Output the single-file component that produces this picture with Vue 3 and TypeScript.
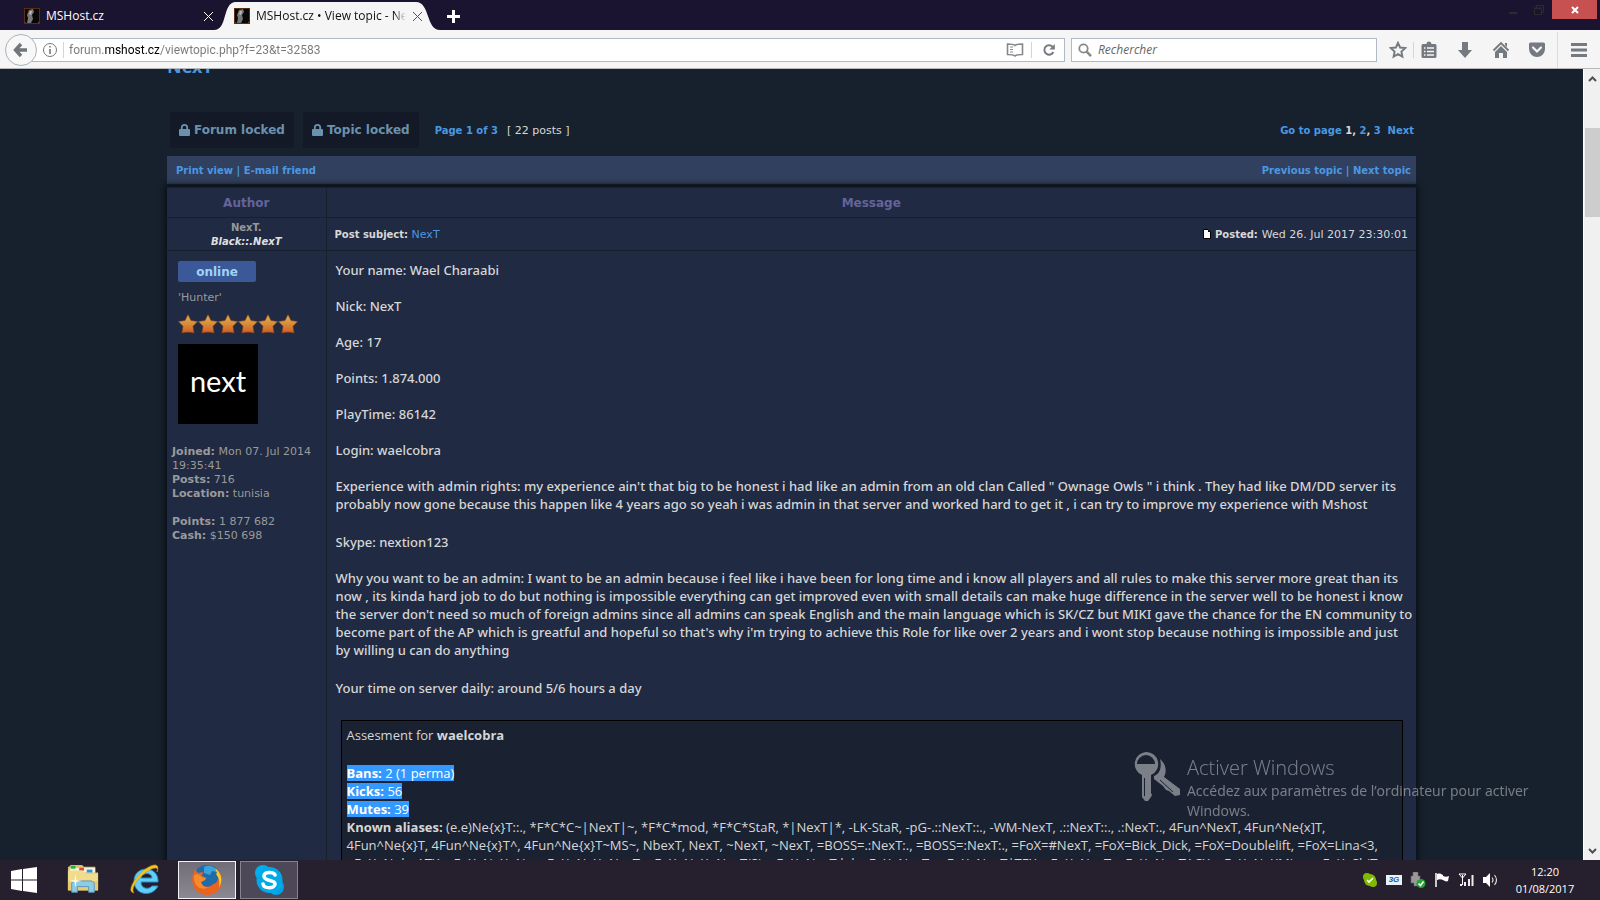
<script setup lang="ts">
import { ref } from 'vue'

interface Paragraph { lines: string[] }

const address = ref('forum.mshost.cz/viewtopic.php?f=23&t=32583')
const search = ref('')

const paragraphs: Paragraph[] = [
  { lines: ['Your name: Wael Charaabi'] },
  { lines: ['Nick: NexT'] },
  { lines: ['Age: 17'] },
  { lines: ['Points: 1.874.000'] },
  { lines: ['PlayTime: 86142'] },
  { lines: ['Login: waelcobra'] },
  {
    lines: [
      'Experience with admin rights: my experience ain\'t that big to be honest i had like an admin from an old clan Called " Ownage Owls " i think . They had like DM/DD server its',
      'probably now gone because this happen like 4 years ago so yeah i was admin in that server and worked hard to get it , i can try to improve my experience with Mshost',
    ],
  },
  { lines: ['Skype: nextion123'] },
  {
    lines: [
      'Why you want to be an admin: I want to be an admin because i feel like i have been for long time and i know all players and all rules to make this server more great than its',
      'now , its kinda hard job to do but nothing is impossible everything can get improved even with small details can make huge difference in the server well to be honest i know',
      "the server don't need so much of foreign admins since all admins can speak English and the main language which is SK/CZ but MIKI gave the chance for the EN community to",
      "become part of the AP which is greatful and hopeful so that's why i'm trying to achieve this Role for like over 2 years and i wont stop because nothing is impossible and just",
      'by willing u can do anything',
    ],
  },
  { lines: ['Your time on server daily: around 5/6 hours a day'] },
]

const penalties = [
  { label: 'Bans:', value: '2 (1 perma)' },
  { label: 'Kicks:', value: '56' },
  { label: 'Mutes:', value: '39' },
]

const aliases = [
  '(e.e)Ne{x}T::., *F*C*C~|NexT|~, *F*C*mod, *F*C*StaR, *|NexT|*, -LK-StaR, -pG-.::NexT::., -WM-NexT, .::NexT::., .:NexT:., 4Fun^NexT, 4Fun^Ne{x]T,',
  '4Fun^Ne{x}T, 4Fun^Ne{x}T^, 4Fun^Ne{x}T~MS~, NbexT, NexT, ~NexT, ~NexT, =BOSS=.:NexT:., =BOSS=:NexT:., =FoX=#NexT, =FoX=Bick_Dick, =FoX=Doublelift, =FoX=Lina<3,',
  '=FoX=Nub=ATX, =FoX=NeXuNe, =FoX=NeXuNexT, =FoX=NeXuNexT(S), =FoX=NexT.lol, =FoX=NexT., =FoX=NexT|TEX, =FoX=NexT, =FoX=NexTACX, =FoX=NeXMine, =FoX=ShiT,',
]
</script>

<template>
  <div class="screen">
    <header class="tabs">
      <div class="tab">
        <svg class="favicon" viewBox="0 0 16 16"><rect width="16" height="16" fill="#070707" /><path d="M5 2l4-1 1 3-2 3 1 4-2 4H3l1-5-1-3z" fill="#777" /><path d="M6 3l2 0-1 4-2-1z" fill="#bbb" /><path d="M0 16v-3l2 2 3 1zM16 16v-4l-2 3-3 1z" fill="#d4651c" /><path d="M0 0h16v16H0zM1 1v14h14V1z" fill="#5a2d10" fill-rule="evenodd" /></svg>
        <span class="tab-name">MSHost.cz</span>
        <button class="tab-close" aria-label="Close tab"><svg viewBox="0 0 11 11"><path d="M1 1l9 9M10 1l-9 9" stroke="#fff" /></svg></button>
      </div>
      <div class="tab active">
        <svg class="tab-shape" viewBox="0 0 226 28" preserveAspectRatio="none"><path d="M0 28c14 0 8-28 22-28h180c14 0 10 28 24 28z" fill="#f5f5f5" /></svg>
        <svg class="favicon" viewBox="0 0 16 16"><rect width="16" height="16" fill="#070707" /><path d="M5 2l4-1 1 3-2 3 1 4-2 4H3l1-5-1-3z" fill="#777" /><path d="M6 3l2 0-1 4-2-1z" fill="#bbb" /><path d="M0 16v-3l2 2 3 1zM16 16v-4l-2 3-3 1z" fill="#d4651c" /><path d="M0 0h16v16H0zM1 1v14h14V1z" fill="#5a2d10" fill-rule="evenodd" /></svg>
        <span class="tab-name">MSHost.cz • View topic - NexT</span>
        <button class="tab-close" aria-label="Close tab"><svg viewBox="0 0 11 11"><path d="M1 1l9 9M10 1l-9 9" stroke="#555" /></svg></button>
      </div>
      <button class="new-tab" aria-label="New tab"><svg viewBox="0 0 13 13"><path d="M6.5 0v13M0 6.5h13" stroke="#fff" stroke-width="3" /></svg></button>
      <div class="window-buttons">
        <button aria-label="Minimize"><svg viewBox="0 0 12 12"><path d="M2 9h8" stroke="#2c2c2c" stroke-width="2" /></svg></button>
        <button aria-label="Restore"><svg viewBox="0 0 12 12"><path d="M1.500 4.500h7v6h-7zM1 4h8M3.500 4V1.500h7v7H9" fill="none" stroke="#2c2c2c" /></svg></button>
        <button class="close" aria-label="Close"><svg viewBox="0 0 12 12"><path d="M3 3l6 6M9 3l-6 6" stroke="#fff" stroke-width="2" /></svg></button>
      </div>
    </header>

    <nav class="toolbar">
      <button class="back" aria-label="Back"><svg viewBox="0 0 16 16"><path d="M8 2L2.500 8L8 14M3 8h11" fill="none" stroke="#72767b" stroke-width="3.400" /></svg></button>
      <div class="url-box">
        <svg class="info" viewBox="0 0 16 16"><circle cx="8" cy="8" r="6.500" fill="none" stroke="#777" /><path d="M8 7v5M8 4v1.600" stroke="#777" stroke-width="1.600" /></svg>
        <span class="rule"></span>
        <input v-model="address" class="url" aria-label="Address">
        <button class="reader" aria-label="Reader view"><svg viewBox="0 0 18 16"><path d="M9 3.500C7.500 2 5 2 1.500 2v10.500C5 12.500 7.500 12.500 9 14c1.500-1.500 4-1.500 7.500-1.500V2C13 2 10.500 2 9 3.500z" fill="none" stroke="#85888c" stroke-width="1.600" /><path d="M4 5h3M4 7.500h3M4 10h3" stroke="#85888c" /></svg></button>
        <span class="rule"></span>
        <button class="reload" aria-label="Reload"><svg viewBox="0 0 14 14"><path d="M10.500 3.700A4.700 4.700 0 1 0 11.300 9" fill="none" stroke="#777b80" stroke-width="2" /><path d="M12.800 1v5.500H7.300z" fill="#777b80" /></svg></button>
      </div>
      <label class="search-box">
        <svg viewBox="0 0 14 14"><circle cx="5.500" cy="5.500" r="4.200" fill="none" stroke="#888" stroke-width="1.800" /><path d="M8.700 8.700l4.300 4.500" stroke="#888" stroke-width="2.400" /></svg>
        <input v-model="search" placeholder="Rechercher" aria-label="Rechercher">
      </label>
      <div class="actions">
        <button class="star" aria-label="Bookmark"><svg viewBox="0 0 18 18"><path d="M9 1.800l2.100 4.700 5.100.6-3.800 3.500 1 5.100L9 13.200l-4.400 2.500 1-5.100L1.800 7.100l5.100-.6z" fill="none" stroke="#757a80" stroke-width="1.900" /></svg></button>
        <button class="ruled" aria-label="Bookmarks list"><svg viewBox="0 0 18 18"><path d="M3 3h3.500a2.500 2.500 0 0 1 5 0H15a1.500 1.500 0 0 1 1.500 1.500v11A1.500 1.500 0 0 1 15 17H3a1.500 1.500 0 0 1-1.500-1.500v-11A1.500 1.500 0 0 1 3 3z" fill="#757a80" /><path d="M4 7h1.500M7 7h7M4 10.500h1.500M7 10.500h7M4 14h1.500M7 14h7" stroke="#f5f5f5" stroke-width="1.500" /></svg></button>
        <button aria-label="Downloads"><svg viewBox="0 0 18 18"><path d="M6 1h6v8h4l-7 8-7-8h4z" fill="#757a80" /></svg></button>
        <button aria-label="Home"><svg viewBox="0 0 18 18"><path d="M1.500 9.500L9 2l7.500 7.500" fill="none" stroke="#757a80" stroke-width="1.900" /><path d="M9 5l6 6v6h-4v-5H7v5H3v-6zM13 2h2v4l-2-2z" fill="#757a80" /></svg></button>
        <button aria-label="Pocket"><svg viewBox="0 0 18 18"><path d="M2.500 1.500h13A1.500 1.500 0 0 1 17 3v5a8 8 0 0 1-16 0V3a1.500 1.500 0 0 1 1.500-1.500z" fill="#757a80" /><path d="M5 6.500l4 4 4-4" fill="none" stroke="#f5f5f5" stroke-width="2.200" stroke-linecap="round" /></svg></button>
        <button class="menu" aria-label="Menu"><svg viewBox="0 0 18 18"><path d="M1 3.500h16M1 9h16M1 14.500h16" stroke="#757a80" stroke-width="3" /></svg></button>
      </div>
    </nav>

    <div class="viewport">
      <main class="page">
        <h1><a href="#topic">NexT</a></h1>
        <div class="topic-tools">
          <a class="locked" href="#forum"><svg viewBox="0 0 11 12"><path d="M2.800 6V3.600a2.700 2.700 0 0 1 5.400 0V6" fill="none" stroke="#6b92ad" stroke-width="1.800" /><rect y="5" width="11" height="7" rx="1" fill="#6b92ad" /></svg>Forum locked</a>
          <a class="locked" href="#locked"><svg viewBox="0 0 11 12"><path d="M2.800 6V3.600a2.700 2.700 0 0 1 5.400 0V6" fill="none" stroke="#6b92ad" stroke-width="1.800" /><rect y="5" width="11" height="7" rx="1" fill="#6b92ad" /></svg>Topic locked</a>
          <a class="page-of" href="#pages">Page 1 of 3</a>
          <span class="count">[ 22 posts ]</span>
          <span class="pager"><a href="#goto">Go to page</a> 1, <a href="#p2">2</a>, <a href="#p3">3</a> &nbsp;<a href="#next">Next</a></span>
        </div>
        <div class="topic-bar">
          <span><a href="#print">Print view</a> | <a href="#mail">E-mail friend</a></span>
          <span><a href="#previous">Previous topic</a> | <a href="#next-topic">Next topic</a></span>
        </div>
        <table class="post">
          <colgroup><col class="author-col"><col></colgroup>
          <thead>
            <tr><th>Author</th><th>Message</th></tr>
          </thead>
          <tbody>
            <tr class="meta">
              <td class="names"><div>NexT.</div><div class="clan">Black::.NexT</div></td>
              <td>
                <div class="subject-row">
                  <span><b>Post subject:</b> <a href="#post">NexT</a></span>
                  <span class="posted"><svg viewBox="0 0 8 10"><path d="M.5.5H5L7.500 3v6.500h-7z" fill="#fff" stroke="#000" /><path d="M5 .5V3h2.500z" fill="#000" /></svg><b>Posted:</b> Wed 26. Jul 2017 23:30:01</span>
                </div>
              </td>
            </tr>
            <tr class="content">
              <td class="profile">
                <div class="rank-block">
                  <div class="online">online</div>
                  <div class="rank">'Hunter'</div>
                  <div class="stars">
                    <svg v-for="n in 6" :key="n" viewBox="0 0 20 20">
                      <defs><linearGradient id="star-fill" x1="0" y1="0" x2="0" y2="1"><stop offset="0" stop-color="#dcb254" /><stop offset="0.500" stop-color="#d98c38" /><stop offset="1" stop-color="#cf5a22" /></linearGradient></defs>
                      <path d="M10 .5l3 6 6.700 1-4.700 4.700 1.100 7.100c-2-1.400-10.200-1.400-12.200 0L5 12.200.3 7.500l6.700-1z" fill="url(#star-fill)" stroke="#7a4220" stroke-width="0.600" />
                    </svg>
                  </div>
                  <svg class="avatar" viewBox="0 0 80 80"><rect width="80" height="80" /><text x="40" y="48" text-anchor="middle">next</text></svg>
                </div>
                <div class="facts">
                  <div><b>Joined:</b> Mon 07. Jul 2014 19:35:41</div>
                  <div><b>Posts:</b> 716</div>
                  <div><b>Location:</b> tunisia</div>
                </div>
                <div class="facts">
                  <div><b>Points:</b> 1 877 682</div>
                  <div><b>Cash:</b> $150 698</div>
                </div>
              </td>
              <td class="message">
                <p v-for="(p, i) in paragraphs" :key="i" :class="{ long: p.lines.length > 1 }"><span v-for="line in p.lines" :key="line" class="line">{{ line }}</span></p>
                <div class="quote">
                  <p>Assesment for <b>waelcobra</b></p>
                  <div v-for="item in penalties" :key="item.label"><span class="selected"><b>{{ item.label }}</b> {{ item.value }}</span></div>
                  <div class="line"><b>Known aliases:</b> {{ aliases[0] }}</div>
                  <div class="line">{{ aliases[1] }}</div>
                  <div class="line">{{ aliases[2] }}</div>
                </div>
              </td>
            </tr>
          </tbody>
        </table>
      </main>
      <div class="scrollbar">
        <svg viewBox="0 0 9 6"><path d="M1 5l3.500-3.500L8 5" fill="none" stroke="#505050" stroke-width="2" /></svg>
        <div class="thumb"></div>
        <svg viewBox="0 0 9 6"><path d="M1 1l3.500 3.500L8 1" fill="none" stroke="#505050" stroke-width="2" /></svg>
      </div>
    </div>

    <aside class="activation">
      <svg viewBox="0 0 47 49">
        <path fill-rule="evenodd" d="M12 0a12 12 0 0 1 5 23v18l1 2-1 2-3 4h-3l-3-4V23A12 12 0 0 1 12 0zM3 12h18a9 9 0 0 0-18 0zM10 26v18h1V26z" />
        <path d="M26 7c6 5 7 12 4 18l16 12v6l-5 1-6-5-3-1-3-4-9-7v-3c6-2 8-9 6-17z" />
        <path d="M26 28l13 12" stroke="#1a2232" stroke-width="1" />
      </svg>
      <div>
        <div class="activation-title">Activer Windows</div>
        <div class="activation-text">Accédez aux paramètres de l’ordinateur pour activer Windows.</div>
      </div>
    </aside>

    <footer class="taskbar">
      <button class="app" aria-label="Start"><svg class="start" viewBox="0 0 26 26"><path d="M0 4l11-2v10.500H0zM12 2l14-2v12.500H12zM0 13.500h11V24L0 22zM12 13.500h14V26l-14-2z" fill="#fff" /></svg></button>
      <button class="app" aria-label="Explorer">
        <svg viewBox="0 0 34 32"><path d="M2 2l2-2h12l2 2h12v6h3v19H1V2z" fill="#d9c06c" /><path d="M3 3h27v5H3z" fill="#f7f2db" /><path d="M4 1h5v3H4z" fill="#25b33b" /><path d="M13 3h5v3h-5z" fill="#db4a30" /><path d="M21 5h6v3h-6z" fill="#2b91dd" /><path d="M1 6h15l4 3h13v18H1z" fill="#f1dc8c" /><path d="M1 17h32v10H1z" fill="#e6cb70" /><path d="M5 29V19l3-2h18l3 2v10h-6v-6H11v6z" fill="#8fcbe6" stroke="#5598bd" /><path d="M9 10l1 6 6 1-6 1-1 6-1-6-6-1 6-1z" fill="#fffbe0" /></svg>
      </button>
      <button class="app" aria-label="Internet Explorer">
        <svg viewBox="0 0 32 32"><path d="M29 18H12c0 7 8 8 11 4h6C23 34 5 31 5 17 5 1 30 1 29 18zM12 14h11c0-6-10-6-11 0z" fill="#62cdf6" stroke="#2590cc" /><path d="M5 29C-4 28 8 10 18 4c8-5 13-4 10 4C30 3 25 3 19 7 9 13 1 25 5 29z" fill="#f6c51d" stroke="#c79510" stroke-width="0.600" /></svg>
      </button>
      <button class="app framed current" aria-label="Firefox">
        <svg viewBox="0 0 32 32"><circle cx="16" cy="15" r="14" fill="#1f6ca8" /><path d="M13 3c5-3 12 0 13 5l-5-1-2 4-6-2z" fill="#3ca3da" /><path d="M29 9c6 12-2 22-13 22S-1 21 2 10l2-5 3 4 5-1-1 4 4 2-1 2-4 2c2 6 9 6 12 2l3-1 3-5z" fill="#e8641f" /><path d="M24 4c7 5 8 13 4 20 1-6 0-10-3-14l1-1z" fill="#f9c62f" /><path d="M3 11l4-1 4 3 4 1-1 2-4 2c1 4 4 6 8 5-8 5-16-1-15-12z" fill="#f58b2c" /></svg>
      </button>
      <button class="app framed" aria-label="Skype">
        <svg viewBox="0 0 32 32"><circle cx="10" cy="9" r="8" fill="#00aff0" /><circle cx="23" cy="23" r="8" fill="#00a3e4" /><circle cx="16.500" cy="16" r="13" fill="#00aae8" /><path d="M22 11c-1-3-11-4-11 1 0 6 11 3 11 8 0 5-11 5-12 0" fill="none" stroke="#fff" stroke-width="3.600" stroke-linecap="round" /></svg>
      </button>
      <div class="tray">
        <svg viewBox="0 0 16 16"><circle cx="5" cy="5" r="4" fill="#7fba00" /><circle cx="11" cy="11" r="4" fill="#7fba00" /><circle cx="8" cy="8" r="6" fill="#7fba00" /><path d="M5 8l2 2 4-4" fill="none" stroke="#fff" stroke-width="1.600" /></svg>
        <span class="mobile">3G</span>
        <svg viewBox="0 0 16 16"><path d="M3 0h5v4h2v7H7v3H4v-3H1V4h2z" fill="#999" stroke="#666" stroke-width="0.600" /><circle cx="11" cy="11.500" r="4.500" fill="#23a532" /><path d="M8.500 11.500l2 2 3-4" fill="none" stroke="#fff" stroke-width="1.500" /></svg>
        <svg viewBox="0 0 16 16"><path d="M2 1v14" stroke="#fff" stroke-width="1.500" /><path d="M3 2c3-1 4 0 6 1v1c2 1 4 1 6 0l-1 5c-2 1-3 0-5-1-2-1-4-1-6 0z" fill="#fff" /></svg>
        <svg viewBox="0 0 16 16"><path d="M1 2h7L4.500 6zM4.500 3v10" stroke="#fff" fill="none" /><path d="M2 14h2v-2H2zM6 14h2v-4H6zM10 14h2V7h-2zM13.500 14h2V3h-2z" fill="#eee" /></svg>
        <svg viewBox="0 0 16 16"><path d="M1 5h3l4-4v14l-4-4H1z" fill="#fff" /><path d="M10 5.500q2 2.500 0 5M12.500 3q4 5 0 10" fill="none" stroke="#ddd" stroke-width="1.200" /></svg>
      </div>
      <div class="clock"><div>12:20</div><div>01/08/2017</div></div>
    </footer>
  </div>
</template>

<style>
html, body { overflow: hidden; }
</style>

<style scoped>
.screen {
  height: 100vh;
  display: flex;
  flex-direction: column;
  overflow: hidden;
  position: relative;
  background: #16212d;
  font-family: "DejaVu Sans", Verdana, sans-serif;
  font-size: 11px;
}
.screen * { box-sizing: border-box; }
svg { display: block; flex: none; }
button { border: 0; background: none; padding: 0; display: flex; align-items: center; justify-content: center; flex: none; }
a { color: #4a98e2; text-decoration: none; }
input { border: 0; outline: 0; background: none; padding: 0; min-width: 0; }

.tabs { height: 30px; flex: none; display: flex; background: #1a1431; font: 12px/16px "Open Sans", "Segoe UI", sans-serif; color: #fff; }
.tab { width: 214px; padding: 2px 0 0 24px; display: flex; align-items: center; position: relative; }
.tab > * { position: relative; }
.tab.active { width: 226px; padding-left: 20px; color: #111; }
.tab .tab-shape { position: absolute; left: 0; top: 2px; width: 100%; height: 28px; }
.favicon { width: 16px; height: 16px; margin-right: 6px; }
.tab-name { flex: 1; white-space: nowrap; overflow: hidden; }
.active .tab-name { mask-image: linear-gradient(to right, #000 92%, transparent); }
.tab-close { width: 11px; height: 11px; margin: 0 0 0 8px; }
.active .tab-close { margin: 0 17px 0 6px; }
.tab-close svg { width: 11px; height: 11px; }
.new-tab { width: 26px; padding-top: 2px; }
.new-tab svg { width: 13px; height: 13px; }
.window-buttons { margin-left: auto; margin-right: 3px; display: flex; align-items: flex-start; }
.window-buttons button { width: 26px; height: 19px; }
.window-buttons svg { width: 12px; height: 12px; }
.window-buttons .close { width: 45px; background: #c75050; }

.toolbar { height: 39px; flex: none; display: flex; align-items: center; background: #f5f5f5; border-bottom: 1px solid #b8b8b8; padding: 2px 2px 0 5px; font-family: Roboto, "Segoe UI", sans-serif; }
.back { width: 32px; height: 32px; border: 1px solid #a9b2bc; border-radius: 50%; background: #f8f8f8; position: relative; }
.back svg { width: 16px; height: 16px; }
.url-box { flex: 1; height: 24px; margin-left: -6px; border: 1px solid #b1bac4; background: #fff; display: flex; align-items: center; padding-left: 10px; }
.info { width: 16px; height: 16px; }
.rule { width: 1px; height: 16px; background: #d5d5d5; margin: 0 5px; flex: none; }
.url { flex: 1; font: 12px/16px Roboto, "Segoe UI", sans-serif; color: transparent; background: linear-gradient(to right, #777 36px, #000 36px, #000 90px, #777 90px); background-clip: text; -webkit-background-clip: text; }
.reader svg { width: 18px; height: 16px; }
.reader { margin-right: 2px; }
.reload { width: 24px; margin-right: 3px; }
.reload svg { width: 14px; height: 14px; }
.search-box { flex: 0 1 306px; height: 24px; margin-left: 6px; border: 1px solid #b1bac4; background: #fff; display: flex; align-items: center; padding-left: 6px; }
.search-box svg { width: 14px; height: 14px; margin-right: 6px; }
.search-box input { flex: 1; font: italic 12px/16px "Open Sans", "Segoe UI", sans-serif; }
.search-box input::placeholder { color: #666; opacity: 1; }
.actions { display: flex; margin-left: 6px; align-items: center; }
.actions button { width: 36px; height: 36px; }
.actions svg { width: 18px; height: 18px; }
.actions .star { width: 30px; }
.actions .ruled { width: 26px; margin-right: 8px; padding-left: 5px; background: linear-gradient(#d5d5d5, #d5d5d5) no-repeat left center / 1px 16px; }
.actions .menu { width: 41px; margin-left: 2px; border-left: 1px solid #ddd; padding-left: 2px; }

.viewport { flex: 1; min-height: 0; display: flex; overflow: hidden; }
.page { flex: 1; min-width: 0; padding: 0 167px; overflow: hidden; color: #d8d8d8; }
h1 { margin: -16px 0 0; font: bold 18px/26px "Noto Sans", sans-serif; }
.topic-tools { display: flex; align-items: center; height: 36px; margin-top: 33px; padding: 0 2px 0 3px; }
.locked { height: 36px; display: flex; align-items: center; padding: 0 9px; margin-right: 9px; background: #131926; border-radius: 2px; color: #6b92ad; font-size: 12px; line-height: 16px; font-weight: bold; }
.locked svg { width: 11px; height: 12px; margin-right: 4px; }
.page-of { font-size: 10px; font-weight: bold; margin-left: 7px; margin-right: 9px; }
.pager { margin-left: auto; font-size: 10px; font-weight: bold; white-space: pre; }
.topic-bar { height: 28px; margin-top: 8px; padding: 1px 5px 0 9px; background: #32405f; color: #4a98e2; font-size: 10px; font-weight: bold; display: flex; align-items: center; justify-content: space-between; }
.post { width: 100%; margin-top: 3px; table-layout: fixed; border-collapse: collapse; background: #202a42; box-shadow: 0 0 6px 2px #0a0e15; }
.author-col { width: 159px; }
th, td { border: 1px solid #17202d; padding: 0; }
th:first-child, td:first-child { border-left: 0; }
th:last-child, td:last-child { border-right: 0; }
th { height: 30px; font-size: 12px; color: #64649a; }
.meta td { height: 33px; line-height: 14px; padding-top: 2px; }
.meta b, .names { font-size: 10px; }
.names { text-align: center; font-weight: bold; color: #999; }
.clan { color: #e0e0e0; font-style: italic; }
.subject-row { display: flex; justify-content: space-between; padding: 0 8px; }
.posted { display: flex; gap: 4px; }
.posted svg { width: 8px; height: 10px; margin-top: 1px; }
.content td { vertical-align: top; }
.profile { color: #9a9a9a; line-height: 14px; }
.rank-block { padding: 10px 11px 0; }
.online { width: 78px; height: 21px; border-radius: 2px; background: #3b5998; color: #9fd3f5; font-size: 12px; font-weight: bold; line-height: 22px; text-align: center; }
.rank { margin-top: 9px; }
.stars { display: flex; margin-top: 9px; }
.stars svg { width: 20px; height: 20px; }
.avatar { width: 80px; height: 80px; margin-top: 10px; margin-bottom: 21px; }
.avatar text { font: 400 29px Lato, sans-serif; fill: #fff; }
.facts { padding: 0 5px; margin-bottom: 14px; }
.message { font: 500 13px/18px "Noto Sans", "Trebuchet MS", sans-serif; padding: 10px 13px 20px 9px; color: #d6d6d6; }
.message p { margin: 0 0 18px; }
.message .long { margin-bottom: 20px; }
.line { display: block; white-space: nowrap; }
.quote { margin: 23px 0 0 5px; border: 1px solid #000; background: #1a2232; padding: 5px; font-family: "Open Sans", "Trebuchet MS", sans-serif; font-weight: 400; }
.quote p { margin-bottom: 20px; }
.selected { display: inline-block; line-height: 16px; background: #3399ff; color: #fff; }

.scrollbar { width: 17px; flex: none; background: #f0f0f0; border-left: 1px solid #fff; display: flex; flex-direction: column; align-items: center; padding: 7px 0 6px; }
.scrollbar svg { width: 9px; height: 6px; }
.thumb { width: 15px; height: 89px; margin: 46px 0 auto; background: #cdcdcd; }

.activation { position: absolute; right: 40px; bottom: 79px; width: 426px; display: flex; gap: 6px; align-items: flex-start; color: #fff; opacity: 0.42; font-family: "Open Sans", "Segoe UI", sans-serif; }
.activation > svg { width: 47px; height: 49px; fill: #fff; }
.activation-title { font-size: 20px; font-weight: 300; line-height: 32px; }
.activation-text { margin-top: -3px; font-size: 14px; line-height: 20px; }

.taskbar { height: 40px; flex: none; display: flex; align-items: center; background: #251f2e; }
.app { width: 58px; height: 38px; margin-right: 4px; }
.app:first-child { width: 48px; margin-right: 6px; }
.app svg { width: 32px; height: 32px; }
.app .start { width: 26px; height: 26px; }
.framed { border: 1px solid #85828c; background: #4d4857; }
.framed.current { border-color: #f4f4f6; background: linear-gradient(#706d78, #8c8993); }
.tray { margin-left: auto; display: flex; align-items: center; gap: 8px; }
.tray svg { width: 16px; height: 16px; }
.mobile { width: 16px; height: 10px; background: #e8f2fa; color: #1a5a9e; font: italic bold 8px/10px "Liberation Sans", sans-serif; text-align: center; }
.clock { width: 84px; margin: 0 13px 0 5px; text-align: center; color: #fff; font: 11px/17px "Open Sans", "Segoe UI", sans-serif; }
</style>
